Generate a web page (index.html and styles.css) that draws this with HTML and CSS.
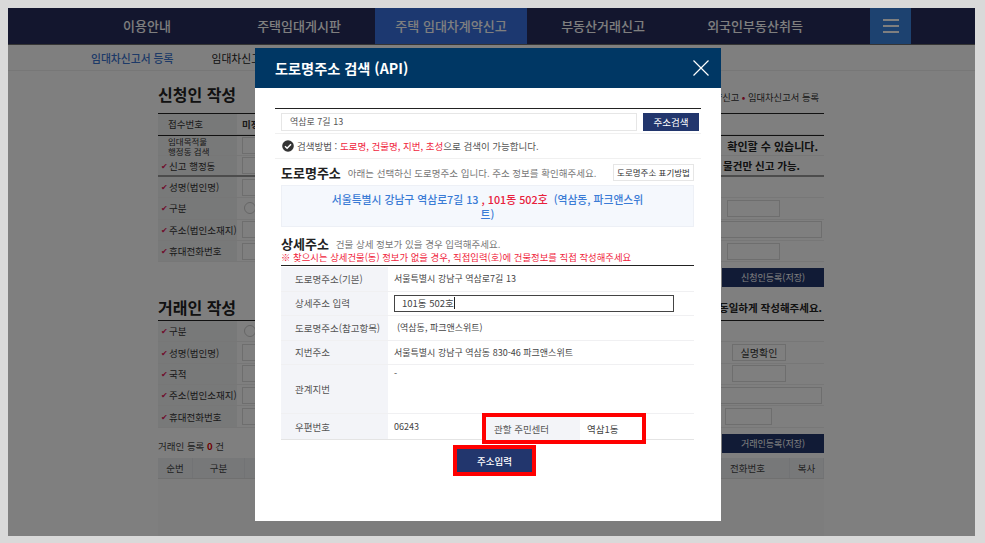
FILE: index.html
```html
<!DOCTYPE html>
<html lang="ko">
<head>
<meta charset="utf-8">
<title>도로명주소 검색</title>
<link rel="stylesheet" href="styles.css">
</head>
<body>
<div class="frame">
  <nav class="nav">
    <a class="nav-item">이용안내</a>
    <a class="nav-item">주택임대게시판</a>
    <a class="nav-item active">주택 임대차계약신고</a>
    <a class="nav-item">부동산거래신고</a>
    <a class="nav-item">외국인부동산취득</a>
    <a class="burger"><i></i><i></i><i></i></a>
  </nav>
  <div class="subnav">
    <span class="sub-on">임대차신고서 등록</span>
    <span>임대차신고서 조회</span>
  </div>
  <main class="page">
    <div class="head-row">
      <h2>신청인 작성</h2>
      <span class="crumb">임대차계약신고 <b>•</b> 임대차신고서 등록</span>
    </div>
    <div class="rows dark-top">
      <div class="row h21"><span class="lab pl">접수번호</span><b class="val">미정</b></div>
      <div class="row h21 thin"><span class="lab pl small">임대목적물<br>행정동 검색</span><span class="box b1"></span><strong class="note">확인할 수 있습니다.</strong></div>
      <div class="row h21 heavy"><span class="lab"><em>✔</em>신고 행정동</span><span class="box b1"></span><strong class="note n2">물건만 신고 가능.</strong></div>
      <div class="row"><span class="lab"><em>✔</em>성명(법인명)</span><span class="box b1"></span></div>
      <div class="row"><span class="lab"><em>✔</em>구분</span><span class="radio"></span><span class="box b2r"></span></div>
      <div class="row"><span class="lab"><em>✔</em>주소(법인소재지)</span><span class="box b3"></span></div>
      <div class="row"><span class="lab"><em>✔</em>휴대전화번호</span><span class="box b1"></span><span class="box b2"></span></div>
    </div>
    <div class="save-row"><a class="save">신청인등록(저장)</a></div>
    <div class="head-row h2-row">
      <h2>거래인 작성</h2>
      <strong class="same">동일하게 작성해주세요.</strong>
    </div>
    <div class="rows dark-top">
      <div class="row"><span class="lab"><em>✔</em>구분</span><span class="radio"></span></div>
      <div class="row"><span class="lab"><em>✔</em>성명(법인명)</span><span class="box b1"></span><span class="box chk">실명확인</span></div>
      <div class="row"><span class="lab"><em>✔</em> 국적</span><span class="box b1"></span><span class="box chk">&nbsp;</span></div>
      <div class="row"><span class="lab"><em>✔</em>주소(법인소재지)</span><span class="box b3"></span></div>
      <div class="row"><span class="lab"><em>✔</em>휴대전화번호</span><span class="box b1"></span><span class="box b4"></span></div>
    </div>
    <div class="save-row s-trade"><span class="count">거래인 등록 <b>0</b> 건</span><a class="save">거래인등록(저장)</a></div>
    <div class="thead"><span class="c1">순번</span><span class="c2">구분</span><span class="c3"></span><span class="c4">전화번호</span><span class="c5">복사</span></div>
    <div class="tbody"></div>
  </main>

  <div class="overlay"></div>

  <section class="modal">
    <header class="m-head">
      <h1>도로명주소 검색 (API)</h1>
      <svg class="close" width="16" height="16" viewBox="0 0 16 16"><path d="M.5.5l15 15M15.500.500l-15 15" stroke="#fff" stroke-width="1.200" fill="none"/></svg>
    </header>
    <div class="m-body">
      <div class="search">
        <span class="s-input">역삼로 7길 13</span>
        <a class="s-btn">주소검색</a>
      </div>
      <div class="hint">
        <svg width="12" height="12" viewBox="0 0 12 12"><circle cx="6" cy="6" r="5.800" fill="#333"/><path d="M3 6.200l2.100 2L9 4.200" stroke="#fff" stroke-width="1.500" fill="none"/></svg>
        <p>검색방법 : <span class="red">도로명, 건물명, 지번, 초성</span>으로 검색이 가능합니다.</p>
      </div>
      <div class="inner">
        <div class="sec-head">
          <h3>도로명주소</h3>
          <span class="desc">아래는 선택하신 도로명주소 입니다. 주소 정보를 확인해주세요.</span>
          <a class="how">도로명주소 표기방법</a>
        </div>
        <div class="addr"><p>서울특별시 강남구 역삼로7길 13 <span class="red">, 101동 502호</span> &nbsp;(역삼동, 파크앤스위트)</p></div>
        <div class="sec-head s-detail">
          <h3>상세주소</h3>
          <span class="desc">건물 상세 정보가 있을 경우 입력해주세요.</span>
        </div>
        <p class="warn">※ 찾으시는 상세건물(동) 정보가 없을 경우, 직접입력(호)에 건물정보를 직접 작성해주세요</p>
        <div class="table">
          <div class="tr"><span class="th">도로명주소(기본)</span><span class="td">서울특별시 강남구 역삼로7길 13</span></div>
          <div class="tr"><span class="th">상세주소 입력</span><span class="td"><span class="d-input">101동 502호<i class="caret"></i></span></span></div>
          <div class="tr"><span class="th">도로명주소(참고항목)</span><span class="td ref">(역삼동, 파크앤스위트)</span></div>
          <div class="tr"><span class="th">지번주소</span><span class="td">서울특별시 강남구 역삼동 830-46 파크앤스위트</span></div>
          <div class="tr tall"><span class="th">관계지번</span><span class="td top">-</span></div>
          <div class="tr last"><span class="th">우편번호</span><span class="td zip">06243</span>
            <span class="center"><span class="c-lab">관할 주민센터</span><span class="c-val">역삼1동</span></span>
          </div>
        </div>
      </div>
      <div class="submit"><a class="submit-btn">주소입력</a></div>
    </div>
  </section>
</div>
</body>
</html>
```
FILE: styles.css
```css
* { box-sizing: border-box; }
html, body { margin: 0; height: 100%; }
body {
  background: #d9d9d9;
  padding: 8px 10px 7px 8px;
  overflow: hidden;
  font-family: "Noto Sans CJK KR", "Noto Sans", sans-serif;
  color: #333;
}
.frame { position: relative; height: 528px; background: #fff; overflow: hidden; }
h1, h2, h3, p { margin: 0; }

.nav { display: flex; height: 37px; padding-left: 63px; background: #262d5c; border-bottom: 1px solid #6a6a6a; }
.nav-item { width: 152px; display: flex; align-items: center; justify-content: center; font-size: 13px; color: #fff; font-weight: 500; padding-bottom: 2px; white-space: nowrap; }
.active { background: #3870e0; }
.burger { width: 41px; margin-left: 39px; background: #3a84e0; display: flex; flex-direction: column; justify-content: center; align-items: center; gap: 4px; }
.burger i { display: block; width: 16px; height: 2px; background: #fff; }

.subnav { display: flex; height: 26px; border-bottom: 1px solid #eee; align-items: center; padding-left: 83px; gap: 38px; font-size: 10.800px; color: #222; }
.sub-on { color: #3a74d0; font-weight: 500; }

.page { width: 666px; margin-left: 150px; }
.head-row { display: flex; justify-content: space-between; align-items: center; height: 42px; padding-top: 4px; }
h2 { font-size: 16px; font-weight: 700; color: #222; line-height: 20px; }
.crumb { font-size: 9.300px; color: #333; padding: 6px 5px 0 0; }
.crumb b { color: #d01040; }
.rows.dark-top { border-top: 1px solid #222; }
.row { display: flex; align-items: center; height: 21.300px; border-bottom: 1px solid #eee; font-size: 9.500px; position: relative; }
.h21 { height: 21px; }
.thin { border-top: 1px solid #222; }
.heavy { border-bottom: 2px solid #999; }
.lab { width: 79px; height: 100%; flex: none; background: #f1f2f3; display: flex; align-items: center; color: #333; margin-right: 5px; white-space: nowrap; padding-left: 3px; line-height: 10px; }
.lab em { color: #e0185a; font-style: normal; font-size: 8px; margin-right: 1px; }
.pl { padding-left: 10px; }
.small { font-size: 8.500px; }
.val { font-size: 9.500px; }
.box { height: 17px; border: 1px solid #ddd; flex: none; font-size: 10px; display: flex; align-items: center; justify-content: center; }
.b1 { width: 70px; }
.b2 { width: 53px; margin-left: 415px; }
.b2r { width: 53px; margin-left: 471px; }
.b3 { width: 580px; }
.b4 { width: 47px; margin-left: 413px; }
.chk { width: 54px; margin-left: 420px; }
.radio { width: 12px; height: 12px; border: 1px solid #ccc; border-radius: 50%; margin-left: 2px; flex: none; }
.note { position: absolute; right: 6px; font-size: 11px; color: #222; }
.n2 { right: 24px; font-size: 10.500px; }
.save-row { display: flex; justify-content: flex-end; height: 25px; align-items: center; padding-top: 6px; }
.save { width: 102px; height: 19px; background: #22366d; color: #fff; font-size: 9px; display: flex; align-items: center; justify-content: center; }
.h2-row { height: 33px; padding-top: 7px; }
.same { font-size: 10.500px; color: #222; padding-right: 2px; }
.s-trade.save-row { justify-content: space-between; }
.count { font-size: 9.500px; color: #444; padding-top: 6px; }
.count b { color: #e00000; }
.thead { display: flex; height: 21px; margin-top: 5px; background: #eef0f3; border-bottom: 1px solid #e0e0e0; font-size: 9.500px; color: #444; align-items: center; text-align: center; }
.thead span { height: 100%; display: flex; align-items: center; justify-content: center; border-right: 1px solid #e4e6ea; }
.c1 { width: 35px; }
.c2 { width: 52px; }
.c3 { width: 461px; }
.c4 { width: 84px; }
.c5 { width: 34px; }
.tbody { height: 100px; background: #fafafa; }

.overlay { position: absolute; inset: 0; background: rgba(0, 0, 0, .5); }

.modal { position: absolute; left: 247px; top: 40px; width: 466px; height: 473px; background: #fff; }
.m-head { height: 40px; background: #003764; display: flex; align-items: center; justify-content: space-between; padding: 0 12px 0 20px; }
.m-head h1 { font-size: 14.200px; font-weight: 700; color: #fff; }
.close { display: block; }
.m-body { padding: 20px 20px 0; }
.search { display: flex; gap: 6px; border-top: 1.500px solid #222; border-bottom: 1px solid #f0f0f0; padding: 4px 2px 3px 6px; height: 26px; align-items: center; }
.s-input { width: 356px; height: 18px; border: 1px solid #e6e6e6; font-size: 9px; display: flex; align-items: center; padding-left: 8px; color: #555; }
.s-btn { width: 56px; height: 18px; background: #22366d; color: #fff; font-size: 9.500px; display: flex; align-items: center; justify-content: center; }
.hint { display: flex; align-items: center; height: 25px; gap: 3px; padding-left: 7px; font-size: 9.500px; color: #555; border-bottom: 1px solid #f0f0f0; }
.hint svg { flex: none; }
.red { color: #f0243c; }
.inner { padding: 0 7px 0 6px; width: 426px; }
.sec-head { display: flex; align-items: center; height: 26px; gap: 7px; }
h3 { font-size: 13px; font-weight: 700; color: #222; }
.desc { font-size: 9.500px; color: #777; white-space: nowrap; padding-top: 2px; }
.how { margin-left: auto; width: 81px; height: 17px; border: 1px solid #e6e6e6; font-size: 8.500px; display: flex; align-items: center; justify-content: center; color: #333; white-space: nowrap; }
.addr { height: 42px; background: #f5f8fd; border: 1px solid #edf0f6; padding: 6px 48px 0; text-align: center; font-size: 10.800px; font-weight: 500; line-height: 14.500px; color: #3a7bd5; }
.addr .red { color: #e8203c; }
.s-detail { height: 20px; margin-top: 6px; }
.warn { font-size: 9.400px; color: #f0243c; line-height: 10px; white-space: nowrap; margin-top: -1px; }
.table { border-top: 1.500px solid #222; margin-top: 3px; width: 413px; padding-top: 1px; }
.tr { display: flex; height: 24.500px; border-bottom: 1px solid #f0f0f2; font-size: 9px; color: #444; position: relative; }
.tall { height: 49px; }
.last { height: 26px; border-bottom: 1px solid #e4e4e4; }
.th { width: 107px; background: #f3f4f8; display: flex; align-items: center; padding-left: 14px; font-size: 9.500px; color: #555; white-space: nowrap; }
.td { display: flex; align-items: center; padding-left: 6px; flex: 1; }
.ref { padding-left: 9px; }
.top { align-items: flex-start; padding-top: 2px; }
.zip { flex: none; width: 95px; }
.d-input { width: 280px; height: 17px; border: 1px solid #444; display: flex; align-items: center; padding-left: 7px; font-size: 9.500px; }
.caret { display: inline-block; width: 1px; height: 12px; background: #222; }
.center { display: flex; width: 164px; height: 31px; margin-top: -1px; border: 4px solid #f00; font-size: 9.500px; position: absolute; left: 201px; top: 0; background: #fff; }
.c-lab { width: 94px; background: #f3f4f8; display: flex; align-items: center; padding-left: 8px; color: #555; }
.c-val { display: flex; align-items: center; padding-left: 7px; }
.submit { display: flex; justify-content: center; margin-top: 5px; padding-left: 13px; }
.submit-btn { width: 83px; height: 31px; border: 4px solid #f00; background: #22366d; color: #fff; font-size: 9.500px; font-weight: 500; display: flex; align-items: center; justify-content: center; }
```
